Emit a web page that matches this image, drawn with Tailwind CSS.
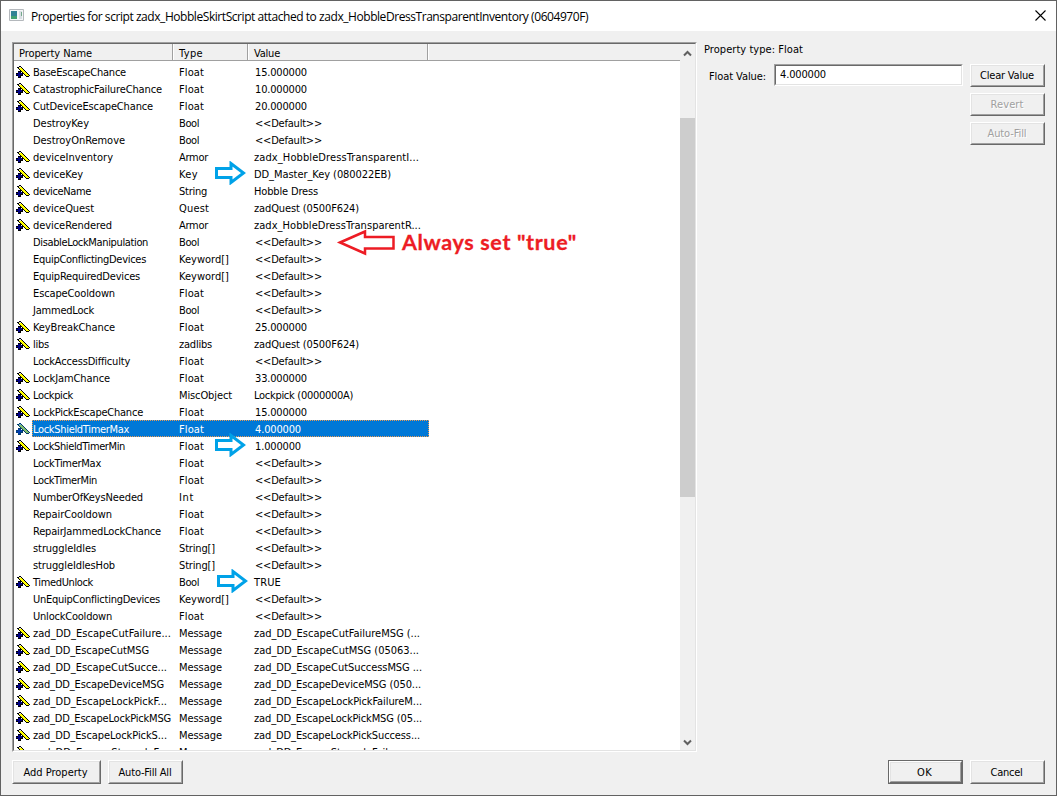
<!DOCTYPE html>
<html lang="en">
<head>
<meta charset="utf-8">
<title>Properties</title>
<script src="https://cdn.jsdelivr.net/npm/@tailwindcss/browser@4"></script>
</head>
<body class="w-[1057px] h-[796px] overflow-hidden bg-[#626262]">
<svg class="hidden">
  <symbol id="wand" viewBox="0 0 14 14" shape-rendering="crispEdges">
    <path fill="#000" d="M3 1h2v1h1v1h1v1h1v1h1v1h1v1h1v1h1v1h1v1h1v1h-1v1h-3v-1h-1v-1h-1v-1h-1v-1h-1v-1h-1v-1h-1v-1h-1v-1h-1v-1h-1v-1h2z"/>
    <path fill="#e4e4e4" d="M3 2h2v1h-2z"/>
    <path fill="#ff0" d="M3 3h3v1h1v1h1v1h1v1h1v1h1v1h1v1h1v1h-3v-1h-1v-1h-1v-1h-1v-1h-1v-1h-1v-1h-1v-1h-1z"/>
    <path fill="#000" d="M2 6h3v2h2v3h-2v2h-3v-2h-2v-3h2z"/>
    <path fill="#000080" d="M2 7h2v1h2v2h-2v2h-2v-2h-2v-1h2z"/>
  </symbol>
  <symbol id="wand-selected" viewBox="0 0 14 14" shape-rendering="crispEdges">
    <path fill="#003c6b" d="M3 1h2v1h1v1h1v1h1v1h1v1h1v1h1v1h1v1h1v1h1v1h-1v1h-3v-1h-1v-1h-1v-1h-1v-1h-1v-1h-1v-1h-1v-1h-1v-1h-1v-1h-1v-1h2z"/>
    <path fill="#6ca8d8" d="M3 2h2v1h-2z"/>
    <path fill="#80bb6b" d="M3 3h3v1h1v1h1v1h1v1h1v1h1v1h1v1h1v1h-3v-1h-1v-1h-1v-1h-1v-1h-1v-1h-1v-1h-1v-1h-1z"/>
    <path fill="#003c6b" d="M2 6h3v2h2v3h-2v2h-3v-2h-2v-3h2z"/>
    <path fill="#003cab" d="M2 7h2v1h2v2h-2v2h-2v-2h-2v-1h2z"/>
  </symbol>
  <symbol id="arrow" viewBox="0 0 32 24">
    <path d="M1.500 7.500h14.500v-5l12.500 9.500-12.500 9.500v-5h-14.500z" fill="#fff" stroke="#00a2e8" stroke-width="3"/>
  </symbol>
</svg>
<div class="relative w-full h-full p-px flex flex-col font-['DejaVu_Sans_Condensed','DejaVu_Sans',sans-serif] [font-stretch:condensed] text-[11px] tracking-[-0.3px] leading-[17px] text-black">
  <header id="titlebar" class="h-[30px] shrink-0 bg-white flex items-center pl-2 pr-[10px] font-['Open_Sans',sans-serif] [font-stretch:normal] text-[12px]">
    <svg class="w-[15px] h-[12px] mr-[7px] -mt-[2px]" viewBox="0 0 15 12"><path d="M.5.5h14v11H.5z" fill="#f4f6f7" stroke="#b4b8bc"/><path d="M2 2h6v8H2z" fill="#318294"/><path d="M2 7h6v3H2z" fill="#41a070"/><path d="M10 2h3v8h-3z" fill="#d8dee3"/><path d="M12 3h1v4h-1z" fill="#73a98a"/></svg>
    <h1 class="grow whitespace-nowrap"><span data-w="557">Properties for script zadx_HobbleSkirtScript attached to zadx_HobbleDressTransparentInventory (0604970F)</span></h1>
    <svg class="w-[11px] h-[11px] -mt-px" viewBox="0 0 11 11"><path d="M.5.5l10 10M10.500.5l-10 10" stroke="#000" stroke-width="1.1"/></svg>
  </header>
  <div class="grow bg-[#f0f0f0] flex flex-col pl-[11px] pr-[11px] pt-[11px]">
    <div class="flex h-[710px]">
      <section class="w-[685px] h-[710px] flex border-t border-l border-t-[#a0a0a0] border-l-[#a0a0a0] border-r border-b border-r-white border-b-white shrink-0">
        <div class="grow flex border border-t-[#696969] border-l-[#696969] border-r-[#e3e3e3] border-b-[#e3e3e3] bg-white overflow-hidden">
          <div class="w-[666px] shrink-0 overflow-hidden">
            <div class="flex h-[17px] bg-[#f0f0f0] border-b border-[#a0a0a0] leading-[20px]">
              <div class="w-[159px] border-r border-[#a0a0a0] pl-[5px]"><span data-w="73">Property Name</span></div>
              <div class="w-[75px] border-l border-l-white border-r border-r-[#a0a0a0] pl-[5px]"><span data-w="24">Type</span></div>
              <div class="w-[180px] border-l border-l-white border-r border-r-[#a0a0a0] pl-[5px]"><span data-w="26">Value</span></div>
              <div class="border-l border-white"></div>
            </div>
            <div id="rows" class="pt-[2px]"></div>
          </div>
          <div class="w-[15px] shrink-0 bg-[#f0f0f0] flex flex-col items-center">
            <svg class="w-[9px] h-[7px] mt-[6px] shrink-0" viewBox="0 0 9 7"><path d="M1 5.500l3.500-3.500 3.500 3.500" fill="none" stroke="#606060" stroke-width="2"/></svg>
            <div class="w-full h-[379px] mt-[61px] bg-[#cdcdcd]"></div>
            <svg class="w-[9px] h-[7px] mt-auto mb-[4px] shrink-0" viewBox="0 0 9 7"><path d="M1 1.500l3.500 3.500 3.500-3.500" fill="none" stroke="#606060" stroke-width="2"/></svg>
          </div>
        </div>
      </section>
      <section class="grow pl-[7px]">
        <p class="h-[21px] leading-[15px]"><span data-w="99">Property type: Float</span></p>
        <div class="flex items-start pt-px">
          <label class="w-[70px] pl-[5px] leading-[25px] whitespace-nowrap"><span data-w="57">Float Value:</span></label>
          <div class="w-[189px] h-[22px] border-t border-l border-[#a0a0a0] border-r border-b border-r-white border-b-white">
            <div class="h-full bg-white border border-t-[#696969] border-l-[#696969] border-r-[#e3e3e3] border-b-[#e3e3e3] pl-[4px] leading-[18px]"><span data-w="46">4.000000</span></div>
          </div>
          <div class="ml-auto flex flex-col gap-[6px]">
            <button class="w-[75px] h-[23px] border border-white border-r-[#696969] border-b-[#696969]"><span class="block h-full border border-[#e3e3e3] border-r-[#a0a0a0] border-b-[#a0a0a0] leading-[19px] pr-px"><span data-w="54">Clear Value</span></span></button>
            <button class="w-[75px] h-[23px] border border-white border-r-[#696969] border-b-[#696969]"><span class="block h-full border border-[#e3e3e3] border-r-[#a0a0a0] border-b-[#a0a0a0] leading-[19px] pr-px text-[#a0a0a0] [text-shadow:1px_1px_0_#fff]"><span data-w="33">Revert</span></span></button>
            <button class="w-[75px] h-[23px] border border-white border-r-[#696969] border-b-[#696969]"><span class="block h-full border border-[#e3e3e3] border-r-[#a0a0a0] border-b-[#a0a0a0] leading-[19px] pr-px text-[#a0a0a0] [text-shadow:1px_1px_0_#fff]"><span data-w="39">Auto-Fill</span></span></button>
          </div>
        </div>
      </section>
    </div>
    <footer class="flex mt-[8px]">
      <button class="w-[89px] h-[24px] border border-white border-r-[#696969] border-b-[#696969]"><span class="block h-full border border-[#e3e3e3] border-r-[#a0a0a0] border-b-[#a0a0a0] leading-[21px] pr-[2px]"><span data-w="64">Add Property</span></span></button>
      <button class="ml-[7px] w-[75px] h-[24px] border border-white border-r-[#696969] border-b-[#696969]"><span class="block h-full border border-[#e3e3e3] border-r-[#a0a0a0] border-b-[#a0a0a0] leading-[21px] pr-px"><span data-w="53">Auto-Fill All</span></span></button>
      <button class="ml-auto w-[75px] h-[24px] border border-[#696969]"><span class="block h-full border border-white border-r-[#696969] border-b-[#696969]"><span class="block h-full border border-[#e3e3e3] border-r-[#a0a0a0] border-b-[#a0a0a0] leading-[20px] pr-[2px]"><span data-w="15">OK</span></span></span></button>
      <button class="ml-[7px] w-[75px] h-[24px] border border-white border-r-[#696969] border-b-[#696969]"><span class="block h-full border border-[#e3e3e3] border-r-[#a0a0a0] border-b-[#a0a0a0] leading-[21px] pr-[2px]"><span data-w="32">Cancel</span></span></button>
    </footer>
  </div>
  <svg class="absolute left-[215px] top-[161px] w-[32px] h-[24px]"><use href="#arrow"/></svg>
  <svg class="absolute left-[215px] top-[433px] w-[32px] h-[24px]"><use href="#arrow"/></svg>
  <svg class="absolute left-[217px] top-[569px] w-[32px] h-[24px]"><use href="#arrow"/></svg>
  <svg class="absolute left-[336px] top-[228px] w-[60px] h-[30px]" viewBox="0 0 60 30"><path d="M4 14.500l25-11v5.500h28.500v11.500H29v5z" fill="none" stroke="#ed1c24" stroke-width="2.500"/></svg>
  <p class="absolute left-[402px] top-[228px] leading-[28px] whitespace-nowrap font-['Lato',sans-serif] [font-stretch:normal] font-bold text-[21.5px] [-webkit-text-stroke:0.3px_#ed1c24] text-[#ed1c24]"><span data-w="175">Always set "true"</span></p>
</div>
<script>
const D = '<<Default>>';
// icon flag, name, name width, type, value, value width
const rows = [
[1,'BaseEscapeChance',93,'Float','15.000000',52],
[1,'CatastrophicFailureChance',129,'Float','10.000000',52],
[1,'CutDeviceEscapeChance',120,'Float','20.000000',52],
[0,'DestroyKey',56,'Bool',D,67],
[0,'DestroyOnRemove',92,'Bool',D,67],
[1,'deviceInventory',80,'Armor','zadx_HobbleDressTransparentI...',165],
[1,'deviceKey',50,'Key','DD_Master_Key (080022EB)',137],
[1,'deviceName',58,'String','Hobble Dress',64],
[1,'deviceQuest',61,'Quest','zadQuest (0500F624)',105],
[1,'deviceRendered',79,'Armor','zadx_HobbleDressTransparentR...',167],
[0,'DisableLockManipulation',115,'Bool',D,67],
[0,'EquipConflictingDevices',113,'Keyword[]',D,67],
[0,'EquipRequiredDevices',107,'Keyword[]',D,67],
[0,'EscapeCooldown',82,'Float',D,67],
[0,'JammedLock',61,'Bool',D,67],
[1,'KeyBreakChance',82,'Float','25.000000',52],
[1,'libs',16,'zadlibs','zadQuest (0500F624)',105],
[0,'LockAccessDifficulty',97,'Float',D,67],
[1,'LockJamChance',77,'Float','33.000000',52],
[1,'Lockpick',40,'MiscObject','Lockpick (0000000A)',99],
[1,'LockPickEscapeChance',110,'Float','15.000000',52],
[1,'LockShieldTimerMax',96,'Float','4.000000',46],
[1,'LockShieldTimerMin',92,'Float','1.000000',46],
[0,'LockTimerMax',68,'Float',D,67],
[0,'LockTimerMin',64,'Float',D,67],
[0,'NumberOfKeysNeeded',110,'Int',D,67],
[0,'RepairCooldown',79,'Float',D,67],
[0,'RepairJammedLockChance',128,'Float',D,67],
[0,'struggleIdles',63,'String[]',D,67],
[0,'struggleIdlesHob',82,'String[]',D,67],
[1,'TimedUnlock',60,'Bool','TRUE',27],
[0,'UnEquipConflictingDevices',127,'Keyword[]',D,67],
[0,'UnlockCooldown',79,'Float',D,67],
[1,'zad_DD_EscapeCutFailure...',138,'Message','zad_DD_EscapeCutFailureMSG (...',166],
[1,'zad_DD_EscapeCutMSG',116,'Message','zad_DD_EscapeCutMSG (05063...',165],
[1,'zad_DD_EscapeCutSucce...',134,'Message','zad_DD_EscapeCutSuccessMSG ...',168],
[1,'zad_DD_EscapeDeviceMSG',131,'Message','zad_DD_EscapeDeviceMSG (050...',167],
[1,'zad_DD_EscapeLockPickF...',134,'Message','zad_DD_EscapeLockPickFailureM...',168],
[1,'zad_DD_EscapeLockPickMSG',138,'Message','zad_DD_EscapeLockPickMSG (05...',168],
[1,'zad_DD_EscapeLockPickS...',134,'Message','zad_DD_EscapeLockPickSuccess...',166],
[1,'zad_DD_EscapeStruggleF...',134,'Message','zad_DD_EscapeStruggleFailure...',159]];
const typeW = {Float:25,Bool:20,Armor:29,Key:19,String:28,Quest:30,'Keyword[]':50,zadlibs:33,MiscObject:53,Int:15,'String[]':36,Message:43};
const esc = s => s.replace(/</g,'&lt;').replace(/>/g,'&gt;');
document.getElementById('rows').innerHTML = rows.map((r,i) => {
  const sel = i === 21;
  return `<div class="flex h-[17px] leading-[19px] whitespace-nowrap">
    <div class="w-[18px] shrink-0 pl-[2px] pt-[2px]">${r[0]?`<svg class="block w-[14px] h-[14px]"><use href="${sel?'#wand-selected':'#wand'}"/></svg>`:''}</div>
    <div class="${sel?'flex w-[397px] bg-[#0078d7] text-white outline-1 outline-dotted outline-[#e89b55] -outline-offset-1':'flex w-[397px]'}">
      <div class="w-[147px] pl-px shrink-0"><span data-w="${r[2]}">${r[1]}</span></div>
      <div class="w-[75px] shrink-0"><span data-w="${typeW[r[3]]}">${r[3]}</span></div>
      <div class="${/^[<\d]/.test(r[4])?'pl-px':''}"><span data-w="${r[5]}">${esc(r[4])}</span></div>
    </div></div>`;
}).join('');
function fit() {
  document.querySelectorAll('[data-w]').forEach(e => {
    e.style.letterSpacing = '0px';
    const n = e.textContent.length, w = e.getBoundingClientRect().width;
    e.style.letterSpacing = ((+e.dataset.w - w) / n).toFixed(3) + 'px';
  });
}
fit();
addEventListener('load', fit);
new ResizeObserver(fit).observe(document.getElementById('titlebar'));
document.fonts.ready.then(fit);
requestAnimationFrame(() => requestAnimationFrame(fit));
</script>
</body>
</html>
